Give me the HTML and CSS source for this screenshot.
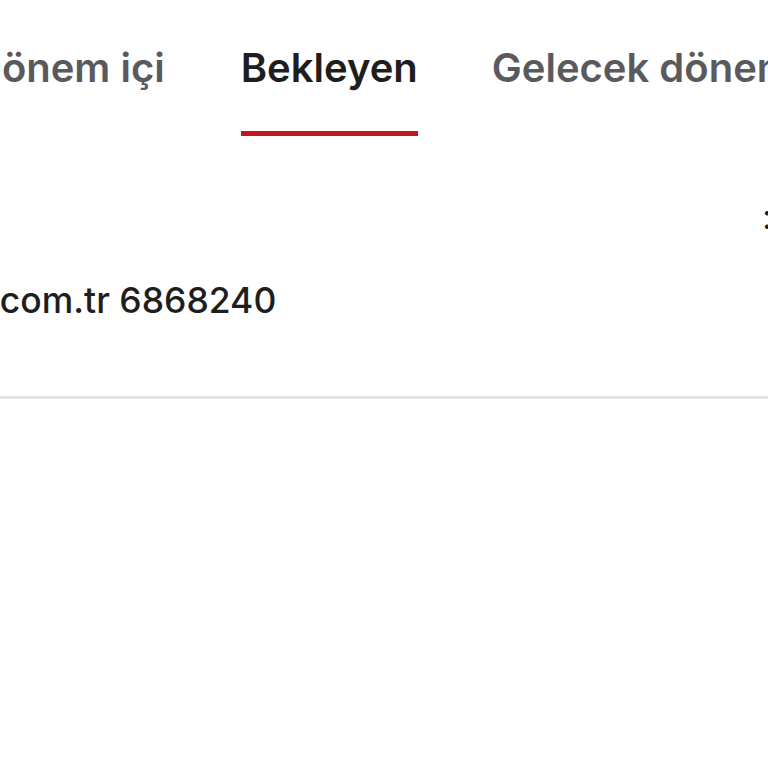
FILE: index.html
```html
<!DOCTYPE html>
<html lang="tr">
<head>
<meta charset="utf-8">
<link rel="stylesheet" href="styles.css">
</head>
<body>
<div class="viewport">
  <nav class="tabs">
    <div class="tab">Dönem içi</div>
    <div class="tab active">Bekleyen</div>
    <div class="tab">Gelecek dönem</div>
  </nav>
  <div class="row">
    <div class="row-top">
      <span class="spacer"></span>
      <span class="amount">:</span>
    </div>
    <div class="merchant">www.site.com.tr 6868240</div>
  </div>
  <div class="divider"></div>
</div>
</body>
</html>
```
FILE: styles.css
```css
html, body {
  margin: 0;
  padding: 0;
  background: #ffffff;
}
body {
  font-family: Inter, "Open Sans", sans-serif;
  overflow: hidden;
  width: 768px;
  height: 768px;
}
.viewport {
  width: 768px;
  overflow: hidden;
}
.tabs {
  display: flex;
  gap: 74px;
  margin-left: -25px;
  white-space: nowrap;
  padding-top: 44px;
}
.tab {
  font-size: 40px;
  font-weight: 600;
  color: #5a5a5e;
  line-height: 48px;
  padding-bottom: 39px;
  border-bottom: 5px solid transparent;
}
.tab:first-child {
  margin-left: -2px;
  margin-right: 2px;
}
.tab.active {
  color: #1e1e1e;
  border-bottom-color: #c5161d;
}
.row {
  padding-top: 60px;
  height: 260px;
  box-sizing: border-box;
}
.row-top {
  display: flex;
  justify-content: flex-end;
  height: 36px;
}
.amount {
  font-size: 34px;
  color: #1e1e1e;
  margin-right: -4px;
}
.merchant {
  margin-left: -168px;
  margin-top: 49px;
  font-size: 35.5px;
  font-weight: 500;
  color: #1e1e1e;
  white-space: nowrap;
  line-height: 40px;
}
.divider {
  height: 3px;
  background: #e4e4e4;
}
```
